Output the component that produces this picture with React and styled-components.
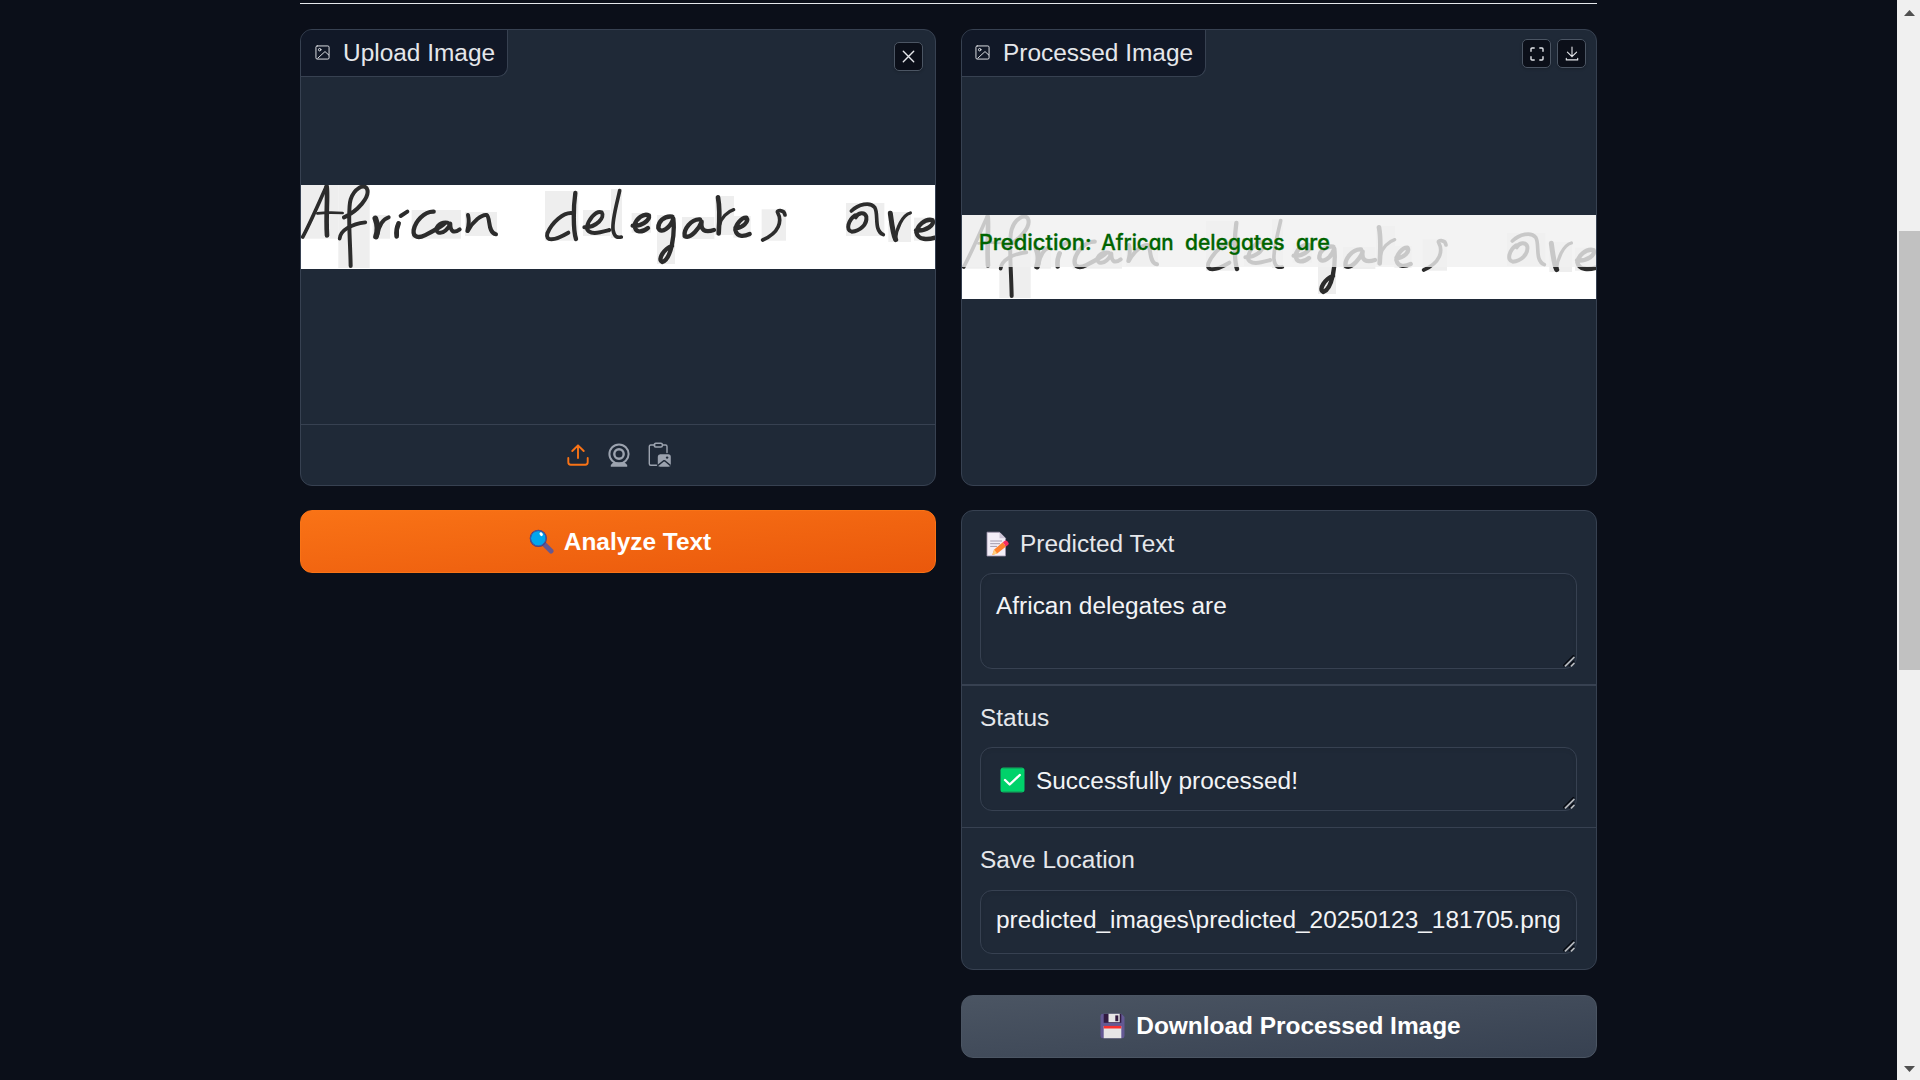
import React from "react";
import styled, { createGlobalStyle } from "styled-components";

const GlobalStyle = createGlobalStyle`
  *, *::before, *::after { box-sizing: border-box; }
  body {
    margin: 0;
    background: #0b0f19;
    color: #f3f4f6;
    font-family: "Liberation Sans", Arial, sans-serif;
    font-size: 24.43px;
    overflow: hidden;
  }
`;

const Page = styled.div`
  display: flex;
  height: 1080px;
  overflow: hidden;
`;

const Main = styled.main`
  flex: 1;
  display: flex;
  flex-direction: column;
  align-items: center;
  padding-top: 3px;
`;

const Rule = styled.hr`
  width: 1297px;
  height: 1px;
  margin: 0 0 25px;
  border: 0;
  background: #e5e7eb;
`;

const Columns = styled.div`
  display: grid;
  grid-template-columns: 636px 636px;
  column-gap: 25px;
  align-items: start;
`;

const Column = styled.section`
  display: flex;
  flex-direction: column;
  gap: 24px;
`;

const Panel = styled.div`
  position: relative;
  display: flex;
  flex-direction: column;
  height: ${(p) => p.$height || "auto"};
  border: 1px solid #374151;
  border-radius: 12px;
  background: #1f2937;
  overflow: hidden;
`;

const PanelLabel = styled.div`
  position: absolute;
  top: 0;
  left: 0;
  display: flex;
  align-items: center;
  height: 47px;
  padding: 0 12px 0 ${(p) => p.$left || 14}px;
  gap: 13px;
  border: solid #374151;
  border-width: 0 1px 1px 0;
  border-bottom-right-radius: 10px;
  background: #111827;
  color: #e5e7eb;
  line-height: 46px;
  white-space: nowrap;
  svg { flex: none; display: block; margin-top: -1px; }
`;

const Actions = styled.div`
  position: absolute;
  top: ${(p) => p.$top}px;
  right: ${(p) => p.$right}px;
  display: flex;
  gap: 6px;
`;

const IconButton = styled.button`
  display: grid;
  place-items: center;
  width: 29px;
  height: 29px;
  padding: 0;
  border: 1px solid #4b5563;
  border-radius: 5px;
  background: #0b0f19;
  color: #e5e7eb;
  box-shadow: 0 1px 3px rgba(0, 0, 0, 0.2);
`;

const ImageArea = styled.div`
  flex: 1;
  display: flex;
  flex-direction: column;
  justify-content: center;
  padding-bottom: ${(p) => p.$bottom || 0}px;
`;

const Picture = styled.svg`
  display: block;
  width: 634px;
  height: 84px;
  background: #fff;
`;

const Sources = styled.div`
  display: flex;
  justify-content: center;
  align-items: center;
  gap: 15px;
  height: 61px;
  padding-left: 1px;
  border-top: 1px solid #374151;
  color: #9ca3af;
`;

const Source = styled.button`
  display: grid;
  place-items: center;
  width: 26px;
  height: 28px;
  padding: 0;
  border: 0;
  background: none;
  color: ${(p) => (p.$active ? "#f97316" : "#9ca3af")};
`;

const ActionButton = styled.button`
  display: flex;
  align-items: center;
  justify-content: center;
  gap: ${(p) => p.$gap || 10}px;
  width: 100%;
  height: 63px;
  margin-top: ${(p) => (p.$primary ? 0 : 1)}px;
  padding: ${(p) => (p.$primary ? "0 0 0 4px" : "0 0 2px 3px")};
  border: 1px solid ${(p) => (p.$primary ? "#f97316" : "#4b5563")};
  border-radius: 12px;
  background: ${(p) =>
    p.$primary
      ? "linear-gradient(to bottom right, #f97316, #ea580c)"
      : "linear-gradient(to bottom right, #4b5563, #374151)"};
  color: #fff;
  font: 700 24.43px/36px "Liberation Sans", Arial, sans-serif;
  white-space: nowrap;
`;

const Field = styled.label`
  display: flex;
  flex-direction: column;
  padding: ${(p) => p.$pad};
  border-bottom: ${(p) => p.$line || 0}px solid #374151;
`;

const FieldName = styled.span`
  display: flex;
  align-items: center;
  gap: 10px;
  height: 36px;
  line-height: 36px;
  margin-bottom: ${(p) => p.$below || 11}px;
  color: #e5e7eb;
  svg { margin-left: 6px; }
`;

const TextBox = styled.span`
  position: relative;
  display: flex;
  align-items: flex-start;
  gap: 11px;
  height: ${(p) => p.$height}px;
  padding: ${(p) => p.$top}px 15px 0;
  border: 1px solid #374151;
  border-radius: 12px;
  box-shadow: inset 0 2px 4px rgba(0, 0, 0, 0.05);
  color: #f3f4f6;
  line-height: 36px;
  white-space: nowrap;
`;

const StatusMark = styled.span`
  display: block;
  height: 26px;
  margin: 4px 0 0 4px;
  line-height: 0;
`;

const Grip = styled.svg`
  position: absolute;
  right: 1px;
  bottom: 1px;
`;

const Scrollbar = styled.div`
  display: flex;
  flex-direction: column;
  align-items: center;
  justify-content: space-between;
  width: 23px;
  padding: 10px 0 8px 2px;
  background: #f0f0f0;
`;

const Thumb = styled.div`
  width: 21px;
  height: 439px;
  margin: 215px 0 auto;
  background: #c1c1c1;
`;

const Arrow = styled.svg`
  display: block;
  margin-right: 1px;
`;

const patches = [
  [33, 555, 112, 161], [145, 555, 94, 249], [248, 645, 52, 71], [365, 630, 148, 86],
  [525, 636, 96, 72], [765, 573, 100, 149], [879, 630, 82, 78], [963, 567, 33, 147],
  [1025, 639, 58, 59], [1101, 645, 54, 147], [1176, 651, 97, 66], [1275, 588, 57, 117],
  [1330, 648, 52, 65], [1415, 628, 73, 94], [1668, 609, 115, 99], [1795, 636, 68, 90],
  [1872, 653, 63, 69],
];

const strokes = [
  ["M38 711 C58 675 85 612 108 562", 10],
  ["M110 560 C114 592 107 650 111 706", 13],
  ["M82 640 Q115 636 158 639", 7],
  ["M149 716 C151 690 185 672 226 667", 10],
  ["M162 652 C200 635 244 590 230 565 C220 552 193 565 182 598 C172 630 180 700 182 798", 11],
  ["M256 655 C264 675 264 692 258 710", 16],
  ["M262 704 C267 678 278 657 296 652", 11],
  ["M326 670 C320 683 318 695 320 709", 13],
  ["M332 648 L352 635", 11],
  ["M431 635 C402 634 376 665 371 690 C368 714 388 714 404 706 C424 696 443 687 462 672", 12],
  ["M473 668 C448 664 430 688 444 697 C460 704 476 684 481 671 C481 693 490 702 509 688", 11],
  ["M534 645 C538 660 536 678 532 693", 11],
  ["M534 692 C548 665 576 642 590 645 C602 652 592 699 618 703", 11],
  ["M856 579 C850 620 849 690 858 717", 12],
  ["M850 640 C820 634 785 670 772 700 C766 724 790 724 835 698", 11],
  ["M883 682 C920 682 946 652 935 637 C916 631 894 661 890 684 C896 708 932 697 958 690", 11],
  ["M989 572 C981 610 966 660 969 689 C973 713 983 713 994 711", 10],
  ["M1028 677 C1050 682 1080 662 1077 647 C1062 637 1038 657 1034 675 C1034 700 1056 698 1074 684", 12],
  ["M1147 650 C1121 646 1104 667 1105 684 C1114 704 1142 682 1150 656 C1155 704 1144 777 1117 786 C1100 779 1124 745 1146 738", 12],
  ["M1230 658 C1203 656 1180 690 1184 708 C1203 719 1229 682 1235 665 C1231 690 1244 699 1272 690", 12],
  ["M1284 592 C1291 630 1288 670 1286 700", 13],
  ["M1289 674 C1293 654 1312 635 1331 629", 9],
  ["M1336 684 C1357 685 1378 665 1369 653 C1355 651 1337 674 1336 690 C1342 714 1364 709 1379 702", 12],
  ["M1485 645 C1483 628 1458 629 1463 638 C1477 663 1468 698 1418 720", 10],
  ["M1695 646 C1675 660 1666 691 1685 695 C1710 694 1732 673 1729 650 C1724 634 1704 638 1697 652", 11],
  ["M1684 633 C1705 613 1740 604 1754 622 C1767 642 1750 692 1780 704", 10],
  ["M1801 640 C1805 670 1809 704 1817 719", 14],
  ["M1816 719 C1819 686 1837 645 1861 639", 9],
  ["M1878 691 C1908 695 1936 674 1927 660 C1904 655 1882 677 1879 697 C1884 721 1915 719 1935 713", 12],
];

const Handwriting = () => (
  <g>
    <g fill="#eeeeee">
      {patches.map(([x, y, w, h]) => (
        <rect key={x} x={x} y={y} width={w} height={h} />
      ))}
    </g>
    <g fill="none" stroke="#2c2c2c" strokeLinecap="round" strokeLinejoin="round">
      {strokes.map(([d, w]) => (
        <path key={d} d={d} strokeWidth={w + 1} />
      ))}
    </g>
  </g>
);

const Words = styled.text`
  font-family: Inter, "Open Sans", sans-serif;
  font-size: 63px;
  font-weight: 500;
  font-feature-settings: "cv11", "ss03";
  fill: #006400;
  stroke: #006400;
  stroke-width: 1px;
  stroke-linejoin: round;
`;

const words = [
  ["Prediction:", 86, 339],
  ["African", 454, 217],
  ["delegates", 705, 299],
  ["are", 1038, 102],
];

const ImageIcon = () => (
  <svg width="15" height="15" viewBox="0 0 24 24" fill="none" stroke="currentColor" strokeWidth="1.5" strokeLinecap="round" strokeLinejoin="round">
    <rect x="1.5" y="1.5" width="21" height="21" rx="2" />
    <circle cx="7.5" cy="7.5" r="2" />
    <path d="M4.5 21L16 10.5L22 16" />
  </svg>
);

const CloseIcon = () => (
  <svg width="13" height="13" viewBox="0 0 13 13" stroke="currentColor" strokeWidth="1.4" strokeLinecap="round">
    <path d="M1.3 1.3L11.7 11.7M11.7 1.3L1.3 11.7" />
  </svg>
);

const ExpandIcon = () => (
  <svg width="14" height="14" viewBox="0 0 14 14" fill="none" stroke="currentColor" strokeWidth="1.4" strokeLinecap="round" strokeLinejoin="round">
    <path d="M1 4.2V2Q1 1 2 1H4.2M9.8 1H12Q13 1 13 2V4.2M13 9.8V12Q13 13 12 13H9.8M4.2 13H2Q1 13 1 12V9.8" />
  </svg>
);

const DownloadIcon = () => (
  <svg width="14" height="15" viewBox="0 0 14 15" fill="none" stroke="currentColor" strokeWidth="1.1" strokeLinecap="round" strokeLinejoin="round">
    <path d="M7 1V10.7M2.4 6.2L7 10.7L11.6 6.2M1.3 12.3V13.9H12.7V12.3" />
  </svg>
);

const UploadIcon = () => (
  <svg width="22" height="22" viewBox="0 0 22 22" fill="none" stroke="currentColor" strokeWidth="1.9" strokeLinecap="round" strokeLinejoin="round">
    <path d="M11 14V1.5M5.3 7L11 1.3L16.7 7M1.3 14V18.3Q1.3 20.7 3.7 20.7H18.3Q20.7 20.7 20.7 18.3V14" />
  </svg>
);

const WebcamIcon = () => (
  <svg width="22" height="25" viewBox="0 0 22 25" fill="none" stroke="currentColor" strokeWidth="2">
    <circle cx="11" cy="11" r="9.6" />
    <circle cx="11" cy="11" r="4.7" strokeWidth="2.4" />
    <path d="M5.2 19.6H16.8L19.2 22V23.8H2.8V22Z" fill="currentColor" stroke="none" />
  </svg>
);

const ClipboardIcon = () => (
  <svg width="24" height="26" viewBox="0 0 24 26" fill="none">
    <path d="M7 3H2.7Q1.3 3 1.3 4.5V21.8Q1.3 23.3 2.7 23.3H8.5M14.5 3H17.6Q19 3 19 4.5V10.5" stroke="currentColor" strokeWidth="1.4" strokeLinecap="round" />
    <rect x="6.2" y="1.2" width="8.2" height="3.8" rx="1.5" stroke="currentColor" strokeWidth="1.4" />
    <path d="M12.2 12.3H20.3Q22.8 12.3 22.8 14.8V22.2Q22.8 24.7 20.3 24.7H12.2Q9.8 24.7 9.8 22.2V14.8Q9.8 12.3 12.2 12.3Z" fill="currentColor" />
    <circle cx="19.1" cy="15.6" r="1.2" fill="#1f2937" />
    <path d="M10 23.4L15.4 19Q16.2 18.5 17 19L22.6 23.6" stroke="#1f2937" strokeWidth="1.5" />
  </svg>
);

const MagnifierIcon = () => (
  <svg width="25" height="25" viewBox="0 0 25 25">
    <path d="M15.5 15.5L22 22" stroke="#635994" strokeWidth="5" strokeLinecap="round" />
    <path d="M13.5 13.5L17 17" stroke="#635994" strokeWidth="3" />
    <circle cx="9.3" cy="9.3" r="8" fill="#00a6ed" stroke="#533566" strokeWidth="1.2" />
    <circle cx="9.3" cy="9.3" r="7.8" fill="none" stroke="#3f5fb0" strokeWidth="1" />
    <ellipse cx="12.2" cy="5.2" rx="1.5" ry="2" fill="#fff" transform="rotate(-35 12.2 5.2)" />
  </svg>
);

const MemoIcon = () => (
  <svg width="24" height="26" viewBox="0 0 24 26">
    <path d="M1 1.2H13.5L19.5 7.2V25H1Z" fill="#f3eef8" stroke="#9b8fa8" strokeWidth=".8" />
    <path d="M13.5 1.2V7.2H19.5Z" fill="#cdc4d6" />
    <path d="M4.2 10H16M4.2 12.7H14M4.2 15.4H11" stroke="#998ea4" strokeWidth=".9" />
    <path d="M8.2 18.6L16.8 11.3L20 15.5L11.2 22.6L6.2 24Z" fill="#ff822d" />
    <path d="M8.2 18.6L11.2 22.6L6.2 24Z" fill="#ffce7c" />
    <path d="M16.8 11.3L18.8 9.7Q20 8.9 21.2 10.1L22.6 11.9Q23.2 13 22 14L20 15.5Z" fill="#f92f60" />
  </svg>
);

const CheckIcon = () => (
  <svg width="25" height="26" viewBox="0 0 25 26">
    <rect x=".5" y=".8" width="24" height="24.4" rx="2.5" fill="#00d26a" />
    <path d="M2.5 1H22.5M2.5 25H22.5" stroke="#168c55" strokeWidth="1" />
    <path d="M5 13L9.7 17.5L19.8 8" fill="none" stroke="#fff" strokeWidth="2.4" strokeLinecap="round" strokeLinejoin="round" />
  </svg>
);

const FloppyIcon = () => (
  <svg width="25" height="26" viewBox="0 0 25 26">
    <path d="M3 .7H21.5L24.5 4V23Q24.5 25.3 22 25.3H3Q.5 25.3 .5 23V3Q.5 .7 3 .7Z" fill="#635994" />
    <path d="M3.7 1H21.3V9.8H3.7Z" fill="#321b41" />
    <path d="M8.5 .8H19.7V9.2H8.5Z" fill="#e6e6e6" />
    <path d="M15.3 2.4H18.3V8.2H15.3Z" fill="#321b41" />
    <path d="M3.7 13H21.3V25.2H3.7Z" fill="#e6e6e6" />
    <path d="M3.7 12.9H21.3V15.5H3.7Z" fill="#f8312f" />
  </svg>
);

const ResizeGrip = () => (
  <Grip width="12" height="12" viewBox="0 0 12 12">
    <path d="M0 11L11 0M6 11L11 6" stroke="#05080f" strokeWidth="1.5" />
    <path d="M2 11.4L11.4 2M8 11.4L11.4 8" stroke="#b4b7bb" strokeWidth="1.7" />
  </Grip>
);

export default function App() {
  return (
    <Page>
      <GlobalStyle />
      <Main>
        <Rule />
        <Columns>
          <Column>
            <Panel $height="457px">
              <PanelLabel><ImageIcon />Upload Image</PanelLabel>
              <Actions $top={12} $right={12}>
                <IconButton aria-label="Clear"><CloseIcon /></IconButton>
              </Actions>
              <ImageArea>
                <Picture viewBox="33 555 1902 252">
                  <Handwriting />
                </Picture>
              </ImageArea>
              <Sources>
                <Source $active aria-label="Upload"><UploadIcon /></Source>
                <Source aria-label="Webcam"><WebcamIcon /></Source>
                <Source aria-label="Clipboard"><ClipboardIcon /></Source>
              </Sources>
            </Panel>
            <ActionButton $primary><MagnifierIcon />Analyze Text</ActionButton>
          </Column>

          <Column>
            <Panel $height="457px">
              <PanelLabel $left={13}><ImageIcon />Processed Image</PanelLabel>
              <Actions $top={9} $right={10}>
                <IconButton aria-label="Fullscreen"><ExpandIcon /></IconButton>
                <IconButton aria-label="Download"><DownloadIcon /></IconButton>
              </Actions>
              <ImageArea $bottom={1}>
                <Picture viewBox="36 645 1902 252">
                  <g transform="translate(3 90)"><Handwriting /></g>
                  <rect x="36" y="645" width="1902" height="156" fill="#f0f0f0" fillOpacity=".8" />
                  {words.map(([word, x, length]) => (
                    <Words key={word} x={x} y="750" textLength={length} lengthAdjust="spacingAndGlyphs">
                      {word}
                    </Words>
                  ))}
                </Picture>
              </ImageArea>
            </Panel>

            <Panel>
              <Field $pad="15px 19px 15px 18px" $line={2}>
                <FieldName><MemoIcon />Predicted Text</FieldName>
                <TextBox $height={96} $top={14}>
                  African delegates are
                  <ResizeGrip />
                </TextBox>
              </Field>
              <Field $pad="14px 19px 16px 18px" $line={1}>
                <FieldName>Status</FieldName>
                <TextBox $height={64} $top={15}>
                  <StatusMark><CheckIcon /></StatusMark>
                  Successfully processed!
                  <ResizeGrip />
                </TextBox>
              </Field>
              <Field $pad="14px 19px 15px 18px">
                <FieldName $below={12}>Save Location</FieldName>
                <TextBox $height={64} $top={11}>
                  predicted_images\predicted_20250123_181705.png
                  <ResizeGrip />
                </TextBox>
              </Field>
            </Panel>

            <ActionButton $gap={11}><FloppyIcon />Download Processed Image</ActionButton>
          </Column>
        </Columns>
      </Main>
      <Scrollbar>
        <Arrow width="11" height="6" viewBox="0 0 11 6"><path d="M5.5 0L11 6H0Z" fill="#505050" /></Arrow>
        <Thumb />
        <Arrow width="11" height="6" viewBox="0 0 11 6"><path d="M0 0H11L5.5 6Z" fill="#505050" /></Arrow>
      </Scrollbar>
    </Page>
  );
}
